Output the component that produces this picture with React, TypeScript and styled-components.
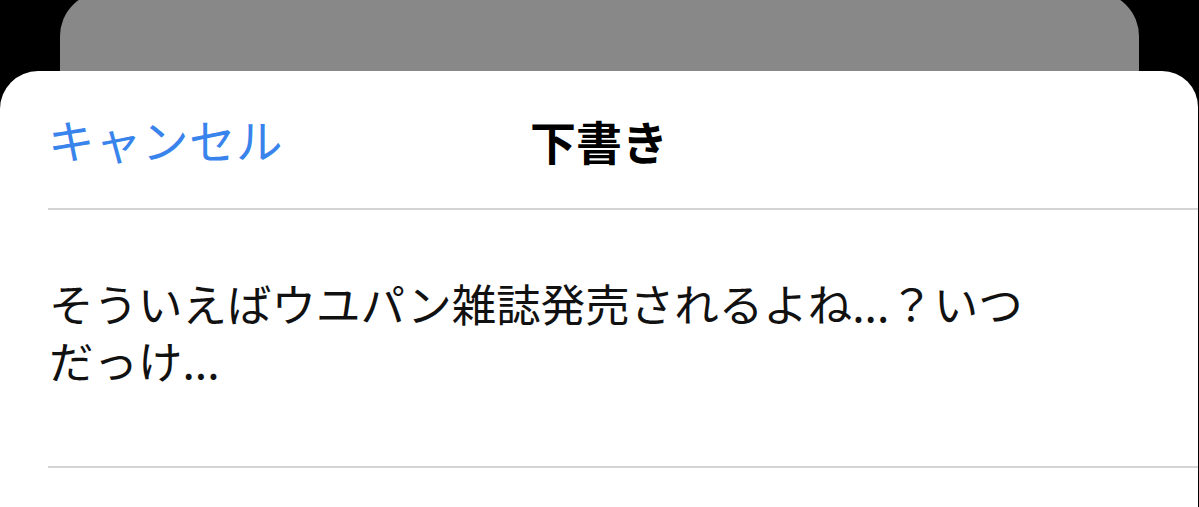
import React from 'react';
import styled, { createGlobalStyle } from 'styled-components';

const GlobalStyle = createGlobalStyle`
    html, body {
        margin: 0;
        padding: 0;
        background: #000;
        overflow: hidden;
    }
    body {
        font-family: 'Noto Sans CJK JP', 'Noto Sans', sans-serif;
        -webkit-font-smoothing: antialiased;
    }
`;

const Screen = styled.div`
    width: 1199px;
    height: 507px;
    background: #000;
    overflow: hidden;
    display: flex;
    flex-direction: column;
`;

// the sheet underneath, peeking out above the draft sheet
const BackSheet = styled.div`
    flex: 0 0 auto;
    height: 79px;
    margin: -8px 60px 0 60px;
    background: #888888;
    border-radius: 44px 44px 0 0;
`;

const Sheet = styled.div`
    flex: 1 1 auto;
    background: #fff;
    border-radius: 38px 36px 0 0;
    margin-right: 1px;
`;

const Header = styled.div`
    height: 137px;
    display: grid;
    grid-template-columns: 1fr auto 1fr;
    align-items: center;
    padding: 0 0 0 48px;
`;

const CancelButton = styled.button`
    justify-self: start;
    border: none;
    background: transparent;
    padding: 0;
    font-family: inherit;
    font-size: 46.5px;
    letter-spacing: 0.5px;
    color: #3884ec;
    cursor: pointer;
    line-height: 1;
`;

const Title = styled.h1`
    margin: 0 0 0 -48px;
    font-size: 46px;
    font-weight: 700;
    color: #000;
    line-height: 1;
`;

const Divider = styled.hr`
    margin: 0 0 0 48px;
    border: none;
    height: 2px;
    background: #d4d4d6;
`;

const DraftRow = styled.div`
    padding: 64px 158px 78px 49px;
`;

const DraftText = styled.p`
    margin: 0;
    font-size: 44.5px;
    line-height: 57px;
    color: #111;
`;

const App: React.FC = () => {
    return (
        <Screen>
            <GlobalStyle />
            <BackSheet />
            <Sheet>
                <Header>
                    <CancelButton>キャンセル</CancelButton>
                    <Title>下書き</Title>
                    <span />
                </Header>
                <Divider />
                <DraftRow>
                    <DraftText>そういえばウユパン雑誌発売されるよね...？いつだっけ...</DraftText>
                </DraftRow>
                <Divider />
            </Sheet>
        </Screen>
    );
};

export default App;
